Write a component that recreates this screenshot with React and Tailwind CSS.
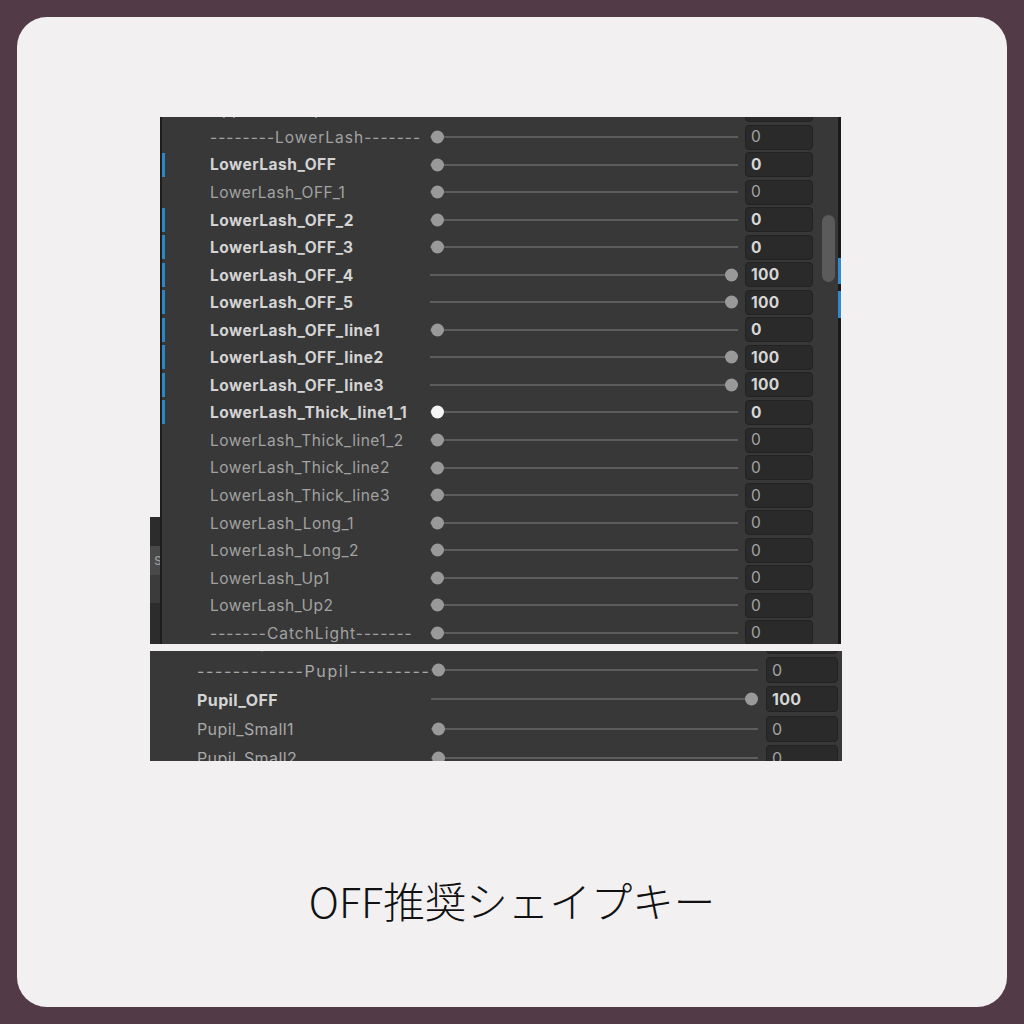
const lashRows = [
  { name: "UpperLash_Up2", value: 0 },
  { name: "--------LowerLash-------", value: 0, header: true },
  { name: "LowerLash_OFF", value: 0, bold: true },
  { name: "LowerLash_OFF_1", value: 0 },
  { name: "LowerLash_OFF_2", value: 0, bold: true },
  { name: "LowerLash_OFF_3", value: 0, bold: true },
  { name: "LowerLash_OFF_4", value: 100, bold: true },
  { name: "LowerLash_OFF_5", value: 100, bold: true },
  { name: "LowerLash_OFF_line1", value: 0, bold: true },
  { name: "LowerLash_OFF_line2", value: 100, bold: true },
  { name: "LowerLash_OFF_line3", value: 100, bold: true },
  { name: "LowerLash_Thick_line1_1", value: 0, bold: true, active: true },
  { name: "LowerLash_Thick_line1_2", value: 0 },
  { name: "LowerLash_Thick_line2", value: 0 },
  { name: "LowerLash_Thick_line3", value: 0 },
  { name: "LowerLash_Long_1", value: 0 },
  { name: "LowerLash_Long_2", value: 0 },
  { name: "LowerLash_Up1", value: 0 },
  { name: "LowerLash_Up2", value: 0 },
  { name: "-------CatchLight-------", value: 0, header: true },
]

const pupilRows = [
  { name: "CatchLight_OFF", value: 0 },
  { name: "------------Pupil----------", value: 0, header: true },
  { name: "Pupil_OFF", value: 100, bold: true },
  { name: "Pupil_Small1", value: 0 },
  { name: "Pupil_Small2", value: 0 },
]

const font = { fontFamily: "Inter, 'Noto Sans', sans-serif" }

function Slider({ value, active }) {
  return (
    <div className="relative h-full flex-1 flex items-center">
      <div className="h-[2px] w-full bg-[#5d5d5d]" />
      <div
        className={`absolute top-1/2 -translate-y-1/2 h-[13px] w-[13px] rounded-full ${
          value === 100 ? "right-[0px]" : "left-[1px]"
        } ${active ? "bg-[#f4f4f4]" : "bg-[#999999]"}`}
      />
    </div>
  )
}

function NumberField({ value, bold, wide }) {
  return (
    <div
      className={`flex items-center rounded-[4px] border border-[#222222] bg-[#2a2a2a] pl-[5px] tracking-[0.3px] ${
        wide ? "h-[26px] w-[72px] text-[16px]" : "h-[25px] w-[68px] text-[15.5px]"
      } ${bold ? "font-bold text-[#d6d6d6]" : "text-[#a4a4a4]"}`}
    >
      {value}
    </div>
  )
}

function LashRow({ row }) {
  return (
    <div className="flex h-[27.55px] items-center">
      <div className={`h-[24px] w-[3px] ${row.bold ? "bg-[#2f86c6]" : ""}`} />
      <div
        className={`w-[265px] shrink-0 overflow-hidden whitespace-nowrap pl-[45px] pt-[1px] text-[15.5px] tracking-[0.5px] ${
          row.bold ? "font-bold text-[#d4d4d4]" : "text-[#a2a2a2]"
        } ${row.header ? "tracking-[1px]" : ""}`}
      >
        {row.name}
      </div>
      <div className="flex h-full w-[308px] items-center">
        <Slider value={row.value} active={row.active} />
      </div>
      <div className="ml-[7px]">
        <NumberField value={row.value} bold={row.bold} />
      </div>
    </div>
  )
}

function PupilRow({ row }) {
  return (
    <div className="flex h-[29.2px] items-center">
      <div
        className={`w-[281px] shrink-0 overflow-hidden whitespace-nowrap pl-[47px] pt-[1px] text-[16px] ${
          row.bold ? "font-bold text-[#d4d4d4]" : "text-[#a8a8a8]"
        } ${row.header ? "tracking-[1.6px]" : "tracking-[0.4px]"}`}
      >
        {row.name}
      </div>
      <div className="flex h-full w-[327px] items-center">
        <Slider value={row.value} />
      </div>
      <div className="ml-[8px]">
        <NumberField value={row.value} bold={row.bold} wide />
      </div>
    </div>
  )
}

export default function App() {
  return (
    <div className="h-[1024px] w-[1024px] bg-[#523a46] p-[17px]" style={font}>
      <div className="h-[990px] w-[990px] rounded-[30px] bg-[#f2f0f1] pl-[133px] pt-[100px]">
        {/* upper inspector capture */}
        <div className="flex h-[527px] w-[692px]">
          <div className="flex w-[10px] flex-col">
            <div className="h-[400px]" />
            <div className="flex flex-1 flex-col bg-[#2c2c2c]">
              <div className="h-[29px]" />
              <div className="flex h-[29px] items-center justify-end overflow-hidden bg-[#494949] text-[15px] text-[#9a9a9a]">
                <span className="-mr-[2px]">s</span>
              </div>
              <div className="h-[28px] bg-[#3b3b3b]" />
            </div>
          </div>
          <div className="flex w-[681px] border-l-2 border-[#1d1d1d] bg-[#383838]">
            <div className="flex-1 overflow-hidden">
              <div className="-mt-[21.3px]">
                {lashRows.map((row, i) => (
                  <LashRow key={i} row={row} />
                ))}
              </div>
            </div>
            <div className="w-[25px] shrink-0 pl-[9px] pt-[98px]">
              <div className="h-[67px] w-[13px] rounded-full bg-[#5b5b5b]" />
            </div>
            <div className="flex w-[3px] shrink-0 flex-col bg-[#1a1a1a]">
              <div className="h-[141px]" />
              <div className="h-[26px] bg-[#2f8ad0]" />
              <div className="h-[7px]" />
              <div className="h-[27px] bg-[#2f8ad0]" />
            </div>
          </div>
        </div>

        {/* lower inspector capture */}
        <div className="mt-[7px] h-[110px] w-[692px] overflow-hidden bg-[#383838]">
          <div className="-mt-[24.6px]">
            {pupilRows.map((row, i) => (
              <PupilRow key={i} row={row} />
            ))}
          </div>
        </div>

        <div
          className="-ml-[133px] mt-[109px] text-center text-[41.5px] font-light leading-[60px] text-[#111111]"
          style={{ fontFamily: "'Noto Sans CJK JP', 'Noto Sans', sans-serif" }}
        >
          OFF推奨シェイプキー
        </div>
      </div>
    </div>
  )
}
